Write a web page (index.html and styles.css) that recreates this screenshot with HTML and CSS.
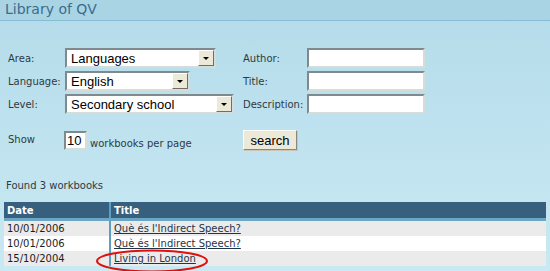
FILE: index.html
```html
<!DOCTYPE html>
<html>
	<head>
		<meta charset="utf-8">
		<link rel="stylesheet" href="styles.css">
		<title>Library of QV</title>
	</head>
	<body>
		<div class="header">Library of QV</div>
		<div class="filters">
			<label class="lbl">Area:</label>
			<div class="field">
				<div class="select area"><span>Languages</span><i class="arrow"></i></div>
			</div>
			<label class="lbl">Author:</label>
			<input class="text" type="text">

			<label class="lbl">Language:</label>
			<div class="field">
				<div class="select lang"><span>English</span><i class="arrow"></i></div>
			</div>
			<label class="lbl">Title:</label>
			<input class="text" type="text">

			<label class="lbl">Level:</label>
			<div class="field">
				<div class="select level"><span>Secondary school</span><i class="arrow"></i></div>
			</div>
			<label class="lbl">Description:</label>
			<input class="text" type="text">
		</div>
		<div class="show">
			<span class="show-lbl">Show</span>
			<input class="num" type="text" value="10">
			<span class="per">workbooks per page</span>
			<button class="search">search</button>
		</div>
		<div class="found">Found 3 workbooks</div>
		<div class="results">
			<table>
				<tr>
					<th class="c-date">Date</th>
					<th>Title</th>
				</tr>
				<tr class="odd">
					<td class="c-date">10/01/2006</td>
					<td><a href="#">Què és l'Indirect Speech?</a></td>
				</tr>
				<tr>
					<td class="c-date">10/01/2006</td>
					<td><a href="#">Què és l'Indirect Speech?</a></td>
				</tr>
				<tr class="odd">
					<td class="c-date">15/10/2004</td>
					<td><a href="#">Living in London</a></td>
				</tr>
			</table>
			<!-- marca vermella -->
			<svg class="mark" width="120" height="26" viewBox="0 0 120 26">
				<ellipse cx="57" cy="12" rx="55" ry="10.5" fill="none" stroke="#e01010" stroke-width="2"/>
			</svg>
		</div>
	</body>
</html>
```

FILE: styles.css
```css
*{
	margin: 0;
	padding: 0;
}
body{
	width: 550px;
	height: 271px;
	overflow: hidden;
	font-family: "DejaVu Sans", Verdana, sans-serif;
	font-size: 10px;
	color: #2f3a40;
	background: linear-gradient(#b4dbea, #c9e9f3);
}
.header{
	height: 20px;
	line-height: 19px;
	padding-left: 5px;
	font-size: 14px;
	color: #3b6c8c;
	background: #a9d4e4;
	border-bottom: 1px solid #86bcd4;
}
.filters{
	display: grid;
	grid-template-columns: 49px 170px 56px 118px;
	grid-auto-rows: 20px;
	column-gap: 8px;
	row-gap: 3px;
	padding: 27px 0 0 8px;
	align-items: center;
}
.field{
	height: 20px;
}
.select{
	height: 20px;
	box-sizing: border-box;
	display: flex;
	align-items: center;
	background: #fff;
	border: 2px solid;
	border-color: #7f8a8e #d6dcd8 #d6dcd8 #7f8a8e;
	font-family: "Liberation Sans", Arial, sans-serif;
	font-size: 13px;
	color: #000;
}
.select span{
	flex: 1;
	padding-left: 4px;
}
.area{ width: 151px; }
.lang{ width: 125px; }
.level{ width: 169px; }
.arrow{
	width: 16px;
	height: 16px;
	box-sizing: border-box;
	background: #ece9d8;
	border: 1px solid;
	border-color: #fff #716f64 #716f64 #fff;
	position: relative;
}
.arrow::after{
	content: "";
	position: absolute;
	left: 4px;
	top: 6px;
	border-left: 3px solid transparent;
	border-right: 3px solid transparent;
	border-top: 3px solid #000;
}
.text{
	width: 118px;
	height: 20px;
	box-sizing: border-box;
	background: #fff;
	border: 2px solid;
	border-color: #7f8a8e #d6dcd8 #d6dcd8 #7f8a8e;
	outline: none;
}
.show{
	display: flex;
	align-items: flex-end;
	padding: 16px 0 0 8px;
	height: 20px;
}
.show-lbl{
	width: 56px;
	align-self: center;
	margin-top: -2px;
}
.num{
	width: 23px;
	height: 19px;
	box-sizing: border-box;
	border: 2px solid;
	border-color: #7f8a8e #d6dcd8 #d6dcd8 #7f8a8e;
	font-family: "Liberation Sans", Arial, sans-serif;
	font-size: 13px;
	padding-left: 1px;
	outline: none;
}
.per{
	margin-left: 3px;
	width: 153px;
	line-height: 12px;
}
.search{
	width: 54px;
	height: 20px;
	background: #ece9d8;
	border: 1px solid;
	border-color: #fff #8a887e #8a887e #fff;
	box-shadow: 1px 1px 0 #c9c6b6;
	font-family: "Liberation Sans", Arial, sans-serif;
	font-size: 13px;
	color: #000;
}
.found{
	padding: 30px 0 0 6px;
	line-height: 12px;
}
.results{
	position: relative;
	margin: 10px 4px 0 4px;
}
table{
	width: 542px;
	border-collapse: collapse;
}
th{
	height: 16px;
	background: #36607e;
	color: #fff;
	text-align: left;
	padding-left: 3px;
	font-weight: bold;
	border-bottom: 3px solid #6ba6c4;
}
td{
	height: 15px;
	padding: 0 0 0 3px;
	background: #fff;
	color: #1d1d1d;
}
.odd td{
	background: #ebebeb;
}
.c-date{
	width: 102px;
	border-right: 2px solid #5f9ec2;
}
td a{
	color: #1f3548;
}
.mark{
	position: absolute;
	left: 91px;
	top: 47px;
}
```
